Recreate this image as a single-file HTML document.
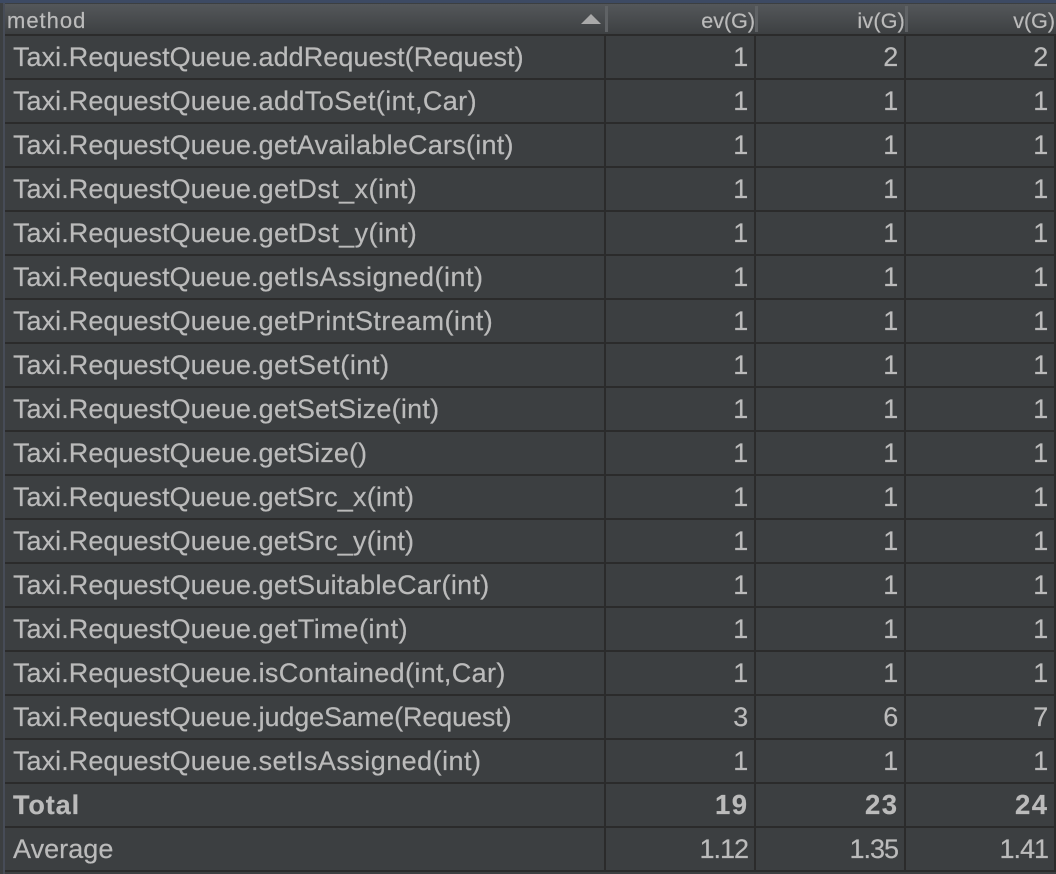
<!DOCTYPE html>
<html><head><meta charset="utf-8">
<style>
html,body{margin:0;padding:0;background:#3c3f41;}
#p{position:relative;width:1056px;height:874px;overflow:hidden;background:#3c3f41;font-family:"Liberation Sans",sans-serif;color:#bbbbbb;-webkit-text-stroke:0.2px;}
.top{position:absolute;left:0;top:0;width:1056px;height:3px;background:#3d4a63;}
.side{position:absolute;left:3px;top:3px;width:2px;height:871px;background:#474c57;}
.hd{position:absolute;left:5px;top:4px;width:1051px;height:30px;background:linear-gradient(#54575a,#3d4042);}
.hl{position:absolute;left:5px;width:1051px;height:2px;background:#2b2b2b;}
.vl{position:absolute;top:35px;width:2px;height:835px;background:#2b2b2b;}
.hs{position:absolute;top:6px;width:3px;height:26px;background:#5f6265;}
.t{position:absolute;white-space:nowrap;line-height:44px;height:44px;font-size:27px;letter-spacing:0.05px;}
.n{position:absolute;white-space:nowrap;line-height:44px;height:44px;font-size:27px;letter-spacing:-0.3px;text-align:right;}
.d{letter-spacing:-1px;}
.h{position:absolute;white-space:nowrap;top:6px;line-height:30px;font-size:21.5px;color:#bbbbbb;}
.t.b{letter-spacing:0.9px;font-weight:bold;}
.n.b{font-size:27.5px;letter-spacing:1.4px;font-weight:bold;margin-right:-0.4px;}
</style></head><body><div id="p">
<div class="top"></div><div class="side"></div><div class="hd"></div>
<div class="hs" style="left:605px"></div><div class="hs" style="left:755px"></div><div class="hs" style="left:905px"></div>
<div class="h" style="left:7px;font-size:22px;letter-spacing:1px">method</div>
<svg style="position:absolute;left:581px;top:14px" width="20" height="11"><polygon points="10,0 20,10 0,10" fill="#a9a9a9"/></svg>
<div class="h" style="right:301px">ev(G)</div><div class="h" style="right:151px;letter-spacing:0.2px">iv(G)</div><div class="h" style="right:1px">v(G)</div>

<div class="hl" style="top:34px"></div><div class="hl" style="top:78px"></div><div class="hl" style="top:122px"></div><div class="hl" style="top:166px"></div><div class="hl" style="top:210px"></div><div class="hl" style="top:254px"></div><div class="hl" style="top:298px"></div><div class="hl" style="top:342px"></div><div class="hl" style="top:386px"></div><div class="hl" style="top:430px"></div><div class="hl" style="top:474px"></div><div class="hl" style="top:518px"></div><div class="hl" style="top:562px"></div><div class="hl" style="top:606px"></div><div class="hl" style="top:650px"></div><div class="hl" style="top:694px"></div><div class="hl" style="top:738px"></div><div class="hl" style="top:782px"></div><div class="hl" style="top:826px"></div><div class="hl" style="top:870px"></div>
<div class="vl" style="left:604px"></div><div class="vl" style="left:754px"></div><div class="vl" style="left:904px"></div><div class="vl" style="left:1054px"></div>

<div class="t" style="left:13px;top:35px">Taxi.RequestQueue.addRequest(Request)</div><div class="n" style="right:308px;top:35px">1</div><div class="n" style="right:158px;top:35px">2</div><div class="n" style="right:8px;top:35px">2</div>
<div class="t" style="left:13px;top:79px">Taxi.RequestQueue.<span style="letter-spacing:.4px">addToSet(int,Car)</span></div><div class="n" style="right:308px;top:79px">1</div><div class="n" style="right:158px;top:79px">1</div><div class="n" style="right:8px;top:79px">1</div>
<div class="t" style="left:13px;top:123px">Taxi.RequestQueue.<span style="letter-spacing:.24px">getAvailableCars(int)</span></div><div class="n" style="right:308px;top:123px">1</div><div class="n" style="right:158px;top:123px">1</div><div class="n" style="right:8px;top:123px">1</div>
<div class="t" style="left:13px;top:167px">Taxi.RequestQueue.<span style="letter-spacing:.43px">getDst_x(int)</span></div><div class="n" style="right:308px;top:167px">1</div><div class="n" style="right:158px;top:167px">1</div><div class="n" style="right:8px;top:167px">1</div>
<div class="t" style="left:13px;top:211px">Taxi.RequestQueue.<span style="letter-spacing:.43px">getDst_y(int)</span></div><div class="n" style="right:308px;top:211px">1</div><div class="n" style="right:158px;top:211px">1</div><div class="n" style="right:8px;top:211px">1</div>
<div class="t" style="left:13px;top:255px">Taxi.RequestQueue.<span style="letter-spacing:.49px">getIsAssigned(int)</span></div><div class="n" style="right:308px;top:255px">1</div><div class="n" style="right:158px;top:255px">1</div><div class="n" style="right:8px;top:255px">1</div>
<div class="t" style="left:13px;top:299px">Taxi.RequestQueue.<span style="letter-spacing:.42px">getPrintStream(int)</span></div><div class="n" style="right:308px;top:299px">1</div><div class="n" style="right:158px;top:299px">1</div><div class="n" style="right:8px;top:299px">1</div>
<div class="t" style="left:13px;top:343px">Taxi.RequestQueue.<span style="letter-spacing:.6px">getSet(int)</span></div><div class="n" style="right:308px;top:343px">1</div><div class="n" style="right:158px;top:343px">1</div><div class="n" style="right:8px;top:343px">1</div>
<div class="t" style="left:13px;top:387px">Taxi.RequestQueue.<span style="letter-spacing:.25px">getSetSize(int)</span></div><div class="n" style="right:308px;top:387px">1</div><div class="n" style="right:158px;top:387px">1</div><div class="n" style="right:8px;top:387px">1</div>
<div class="t" style="left:13px;top:431px">Taxi.RequestQueue.getSize()</div><div class="n" style="right:308px;top:431px">1</div><div class="n" style="right:158px;top:431px">1</div><div class="n" style="right:8px;top:431px">1</div>
<div class="t" style="left:13px;top:475px">Taxi.RequestQueue.<span style="letter-spacing:.2px">getSrc_x(int)</span></div><div class="n" style="right:308px;top:475px">1</div><div class="n" style="right:158px;top:475px">1</div><div class="n" style="right:8px;top:475px">1</div>
<div class="t" style="left:13px;top:519px">Taxi.RequestQueue.<span style="letter-spacing:.2px">getSrc_y(int)</span></div><div class="n" style="right:308px;top:519px">1</div><div class="n" style="right:158px;top:519px">1</div><div class="n" style="right:8px;top:519px">1</div>
<div class="t" style="left:13px;top:563px">Taxi.RequestQueue.<span style="letter-spacing:.31px">getSuitableCar(int)</span></div><div class="n" style="right:308px;top:563px">1</div><div class="n" style="right:158px;top:563px">1</div><div class="n" style="right:8px;top:563px">1</div>
<div class="t" style="left:13px;top:607px">Taxi.RequestQueue.<span style="letter-spacing:.55px">getTime(int)</span></div><div class="n" style="right:308px;top:607px">1</div><div class="n" style="right:158px;top:607px">1</div><div class="n" style="right:8px;top:607px">1</div>
<div class="t" style="left:13px;top:651px">Taxi.RequestQueue.<span style="letter-spacing:.35px">isContained(int,Car)</span></div><div class="n" style="right:308px;top:651px">1</div><div class="n" style="right:158px;top:651px">1</div><div class="n" style="right:8px;top:651px">1</div>
<div class="t" style="left:13px;top:695px">Taxi.RequestQueue.<span style="letter-spacing:-.12px">judgeSame(Request)</span></div><div class="n" style="right:308px;top:695px">3</div><div class="n" style="right:158px;top:695px">6</div><div class="n" style="right:8px;top:695px">7</div>
<div class="t" style="left:13px;top:739px">Taxi.RequestQueue.<span style="letter-spacing:.46px">setIsAssigned(int)</span></div><div class="n" style="right:308px;top:739px">1</div><div class="n" style="right:158px;top:739px">1</div><div class="n" style="right:8px;top:739px">1</div>
<div class="t b" style="left:13px;top:783px">Total</div><div class="n b" style="right:308px;top:783px">19</div><div class="n b" style="right:158px;top:783px">23</div><div class="n b" style="right:8px;top:783px">24</div>
<div class="t" style="left:13px;top:827px">Average</div><div class="n d" style="right:308px;top:827px">1.12</div><div class="n d" style="right:158px;top:827px">1.35</div><div class="n d" style="right:8px;top:827px">1.41</div>
</div></body></html>
